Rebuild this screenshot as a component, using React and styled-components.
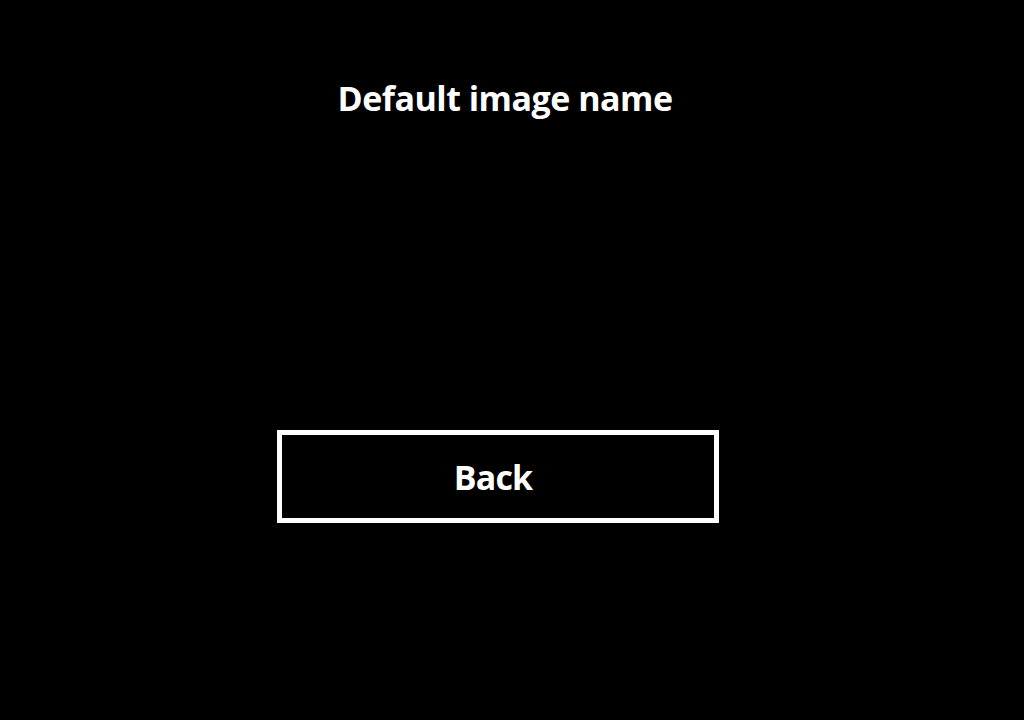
import React from "react";
import styled, { createGlobalStyle } from "styled-components";

const Global = createGlobalStyle`
  html, body {
    margin: 0;
    padding: 0;
    background: #000;
  }
`;

const Screen = styled.div`
  width: 1024px;
  height: 720px;
  background: #000;
  color: #fff;
  font-family: "Open Sans", "Noto Sans", sans-serif;
  display: flex;
  flex-direction: column;
  align-items: center;
  padding-top: 74px;
  box-sizing: border-box;
`;

const Title = styled.h1`
  margin: 0 14px 0 0;
  font-size: 34px;
  font-weight: 700;
  line-height: 48px;
  letter-spacing: -0.5px;
`;

const BackButton = styled.button`
  margin: 308px 28px 0 0;
  width: 442px;
  height: 93px;
  box-sizing: border-box;
  background: #000;
  border: 5px solid #fff;
  color: #fff;
  font-family: inherit;
  font-size: 34px;
  font-weight: 700;
  letter-spacing: -0.8px;
  padding: 0 10px 0 0;
  cursor: pointer;
`;

export default function App() {
  return (
    <Screen>
      <Global />
      <Title>Default image name</Title>
      <BackButton>Back</BackButton>
    </Screen>
  );
}
